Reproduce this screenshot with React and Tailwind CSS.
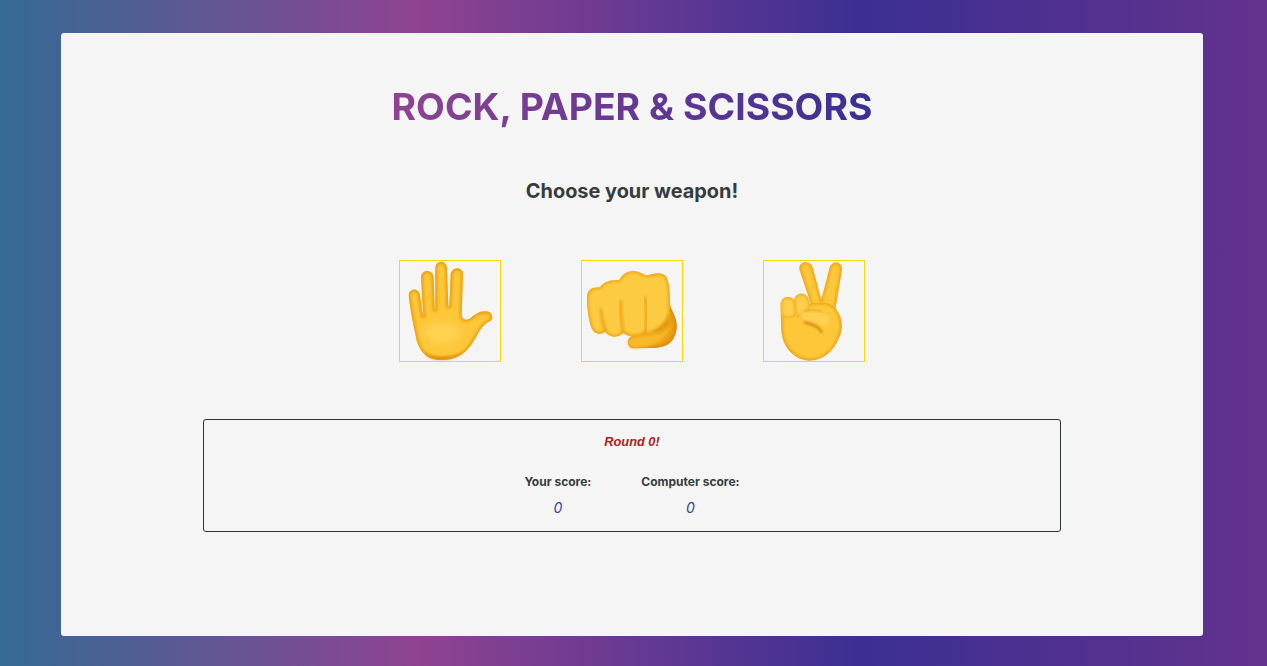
import React from 'react';

// soft inner edge, so the shapes look like the rendered emoji
const Shape = ({ id, d, fill = '#fdc73a', edge = '#ea9f0e', size = 12 }) => (
  <g>
    <clipPath id={`${id}-clip`}>
      <path d={d} />
    </clipPath>
    <path d={d} fill={fill} />
    <g clipPath={`url(#${id}-clip)`}>
      <path d={d} fill="none" stroke={edge} strokeWidth={size} filter="url(#soft)" />
    </g>
  </g>
);

const Blur = () => (
  <defs>
    <filter id="soft" x="-30%" y="-30%" width="160%" height="160%">
      <feGaussianBlur stdDeviation="5" />
    </filter>
    <filter id="thin" x="-30%" y="-30%" width="160%" height="160%">
      <feGaussianBlur stdDeviation="3" />
    </filter>
    <filter id="softer" x="-30%" y="-30%" width="160%" height="160%">
      <feGaussianBlur stdDeviation="10" />
    </filter>
  </defs>
);

const PaperIcon = () => (
  <svg viewBox="30 33 300 300" className="w-full h-full">
    <Blur />
    <Shape
      id="paper"
      d="M56 137 C56 112 88 112 90 137 L99 198 L100 198 L93 85 C92 56 130 56 131 85 L134 178 L136 178 L136 55 C136 29 171 29 171 55 L175 168 L178 168 L182 75 C183 48 220 48 219 75 L215 192 C215 208 228 214 242 204 C254 194 268 183 288 184 C306 185 314 204 300 214 C282 222 274 234 262 254 C246 284 226 318 180 328 C130 336 95 322 80 272 C72 230 62 190 56 137 Z"
    />
    <ellipse cx="155" cy="250" rx="55" ry="32" fill="#ffd250" filter="url(#softer)" />
    <path d="M100 312 C130 336 190 334 226 304 C196 322 140 326 100 312 Z" fill="#d07f06" opacity="0.8" filter="url(#soft)" />
  </svg>
);

const RockIcon = () => (
  <svg viewBox="30 33 300 300" className="w-full h-full">
    <Blur />
    <Shape id="rock-back" fill="#ee9f12" edge="#d58a0a" d="M250 80 C285 76 292 100 295 170 C310 200 322 224 308 258 C296 288 270 294 230 294 L186 295 C164 294 164 266 178 260 L210 230 Z" />
    <path d="M178 262 C214 256 262 262 296 226 C286 268 250 292 186 295 C164 294 162 268 178 262 Z" fill="#f8b82c" filter="url(#soft)" />
    <Shape
      id="rock"
      fill="#fdcb42"
      edge="#eba312"
      size={10}
      d="M45 140 C46 118 62 110 84 112 C92 98 112 88 142 90 C148 72 176 56 200 66 C210 70 220 76 226 76 C240 72 270 62 284 82 C294 100 296 150 292 230 C276 260 236 262 220 246 C204 262 168 264 154 248 C140 266 108 264 100 244 C88 256 70 254 60 238 C50 214 44 170 45 140 Z"
    />
    <path d="M86 175 C88 200 94 225 100 244" stroke="#e89c0c" strokeWidth="7" fill="none" filter="url(#soft)" />
    <path d="M146 150 C146 185 148 220 154 248" stroke="#e89c0c" strokeWidth="7" fill="none" filter="url(#soft)" />
    <path d="M220 140 C224 170 226 215 220 246" stroke="#e89c0c" strokeWidth="8" fill="none" filter="url(#soft)" />
    <path d="M228 246 C250 254 274 248 292 226 L294 180 C280 226 250 240 228 246 Z" fill="#e4960c" filter="url(#soft)" />
  </svg>
);

const ScissorsIcon = () => (
  <svg viewBox="30 33 300 300" className="w-full h-full">
    <Blur />
    <Shape id="sc-v" size={9} d="M136 58 C134 30 172 30 177 56 L202 150 L226 56 C234 26 270 36 263 64 L242 190 L180 190 Z" />
    <Shape
      id="sc-palm"
      size={10}
      d="M80 190 C120 170 210 140 240 170 C264 194 270 230 256 262 C238 306 206 332 166 332 C120 330 84 290 82 240 Z"
    />
    <Shape id="sc-f1" size={8} edge="#eda714" fill="#ffcf4d" d="M79 164 C81 132 123 132 125 164 L127 190 C120 212 84 210 80 188 Z" />
    <Shape id="sc-f2" size={8} edge="#eda714" fill="#ffcf4d" d="M120 154 C122 122 163 124 165 154 L169 182 L130 204 C122 190 120 170 120 154 Z" />
    <Shape
      id="sc-thumb"
      size={4}
      edge="#f0ae20"
      fill="#ffd152"
      d="M150 182 C170 178 200 180 224 190 C240 200 236 224 206 240 C202 226 188 224 170 220 C150 216 134 210 135 197 C136 188 142 184 150 182 Z"
    />
    <path d="M150 216 C168 224 192 224 204 248" stroke="#d08608" strokeWidth="7" fill="none" filter="url(#thin)" />
    <path d="M150 182 C170 178 190 180 205 185" stroke="#e39a10" strokeWidth="3" fill="none" filter="url(#thin)" />
  </svg>
);

const weapons = [
  { name: 'paper', icon: PaperIcon },
  { name: 'rock', icon: RockIcon },
  { name: 'scissors', icon: ScissorsIcon },
];

export default function App() {
  return (
    <div className="w-full h-[666px] overflow-hidden pl-[61px] pt-[33px] bg-[linear-gradient(90deg,#346a94_0%,#8f4391_33%,#3b2f93_68%,#63328c_100%)] font-['Inter',sans-serif]">
      <div className="w-[1142px] h-[603px] bg-[#f5f5f5] rounded-[3px] flex flex-col items-center">
        <h1 className="mt-[51px] h-[46px] leading-[46px] text-[37.4px] font-bold bg-[linear-gradient(90deg,#8f4391,#3b2f93)] bg-clip-text text-transparent">
          ROCK, PAPER &amp; SCISSORS
        </h1>
        <h2 className="mt-[49px] h-[24px] leading-[24px] text-[19.9px] font-bold text-[#363c3e]">Choose your weapon!</h2>
        <div className="mt-[57px] flex gap-[80px]">
          {weapons.map((weapon) => (
            <button key={weapon.name} className="w-[102px] h-[102px] border border-[#ffd700]">
              <weapon.icon />
            </button>
          ))}
        </div>
        <div className="mt-[57px] w-[858px] h-[113px] border border-[#2e3436] rounded-[3px] flex flex-col items-center">
          <p className="mt-[14px] h-[15px] leading-[15px] text-[12.8px] font-bold italic text-[#b01c20] font-['Liberation_Sans',sans-serif]">Round 0!</p>
          <div className="mt-[25px] flex gap-[50px] text-[12px] font-bold text-[#363c3e]">
            <div className="flex flex-col items-center">
              <span className="h-[15px] leading-[15px]">Your score:</span>
              <span className="mt-[10px] h-[17px] leading-[17px] text-[14px] font-normal italic text-[#3540a5]">0</span>
            </div>
            <div className="flex flex-col items-center">
              <span className="h-[15px] leading-[15px]">Computer score:</span>
              <span className="mt-[10px] h-[17px] leading-[17px] text-[14px] font-normal italic text-[#3540a5]">0</span>
            </div>
          </div>
        </div>
      </div>
    </div>
  );
}
